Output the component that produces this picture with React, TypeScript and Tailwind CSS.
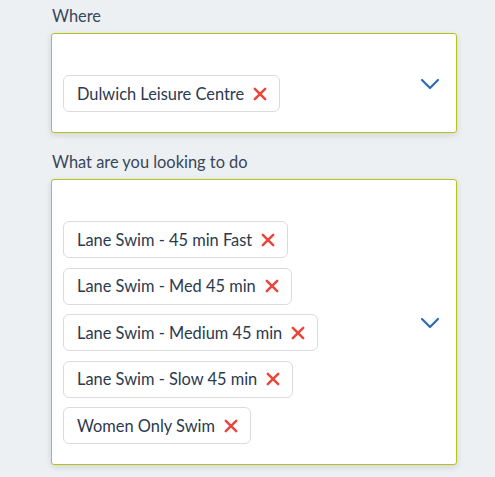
function Chip({ label }: { label: string }) {
    return (
        <div className="flex h-[37px] items-center gap-[9px] self-start rounded-md border border-[#d9dcdf] bg-white pl-[13px] pr-[12px] pt-px text-[16.4px] text-[#2b394e]">
            <span>{label}</span>
            <svg width="14" height="14" viewBox="0 0 14 14" className="shrink-0 -mt-px">
                <path d="M1.8 1.8 L12.2 12.2 M12.2 1.8 L1.8 12.2" stroke="#e8473b" strokeWidth="2.5" strokeLinecap="round" />
            </svg>
        </div>
    )
}

function Chevron() {
    return (
        <svg width="20" height="12" viewBox="0 0 20 12" fill="none" className="shrink-0">
            <path d="M2 2 L10 10 L18 2" stroke="#2d6cb2" strokeWidth="2.2" strokeLinecap="round" strokeLinejoin="round" />
        </svg>
    )
}

function MultiSelect({ label, items, first }: { label: string; items: string[]; first?: boolean }) {
    return (
        <div className={first ? "" : "mt-[17px]"}>
            <p className="mb-[5px] pl-px text-[16.4px] leading-6 text-[#38465a]">{label}</p>
            <div className="flex items-center rounded-[3px] border border-[#b8c21c] bg-white pb-[20px] pl-[11px] pr-[16px] pt-[41px] shadow-[0_2px_6px_rgba(0,0,0,0.12)]">
                <div className="flex flex-1 flex-col gap-[9.5px]">
                    {items.map((it) => (
                        <Chip key={it} label={it} />
                    ))}
                </div>
                <div className="-mt-[20px]">
                    <Chevron />
                </div>
            </div>
        </div>
    )
}

export default function App() {
    return (
        <div className="min-h-[477px] w-[495px] bg-[#edf0f3] pl-[51px] pt-[4px] font-['Lato',sans-serif]">
            <div className="w-[406px]">
                <MultiSelect first label="Where" items={["Dulwich Leisure Centre"]} />
                <MultiSelect
                    label="What are you looking to do"
                    items={[
                        "Lane Swim - 45 min Fast",
                        "Lane Swim - Med 45 min",
                        "Lane Swim - Medium 45 min",
                        "Lane Swim - Slow 45 min",
                        "Women Only Swim",
                    ]}
                />
            </div>
        </div>
    )
}
